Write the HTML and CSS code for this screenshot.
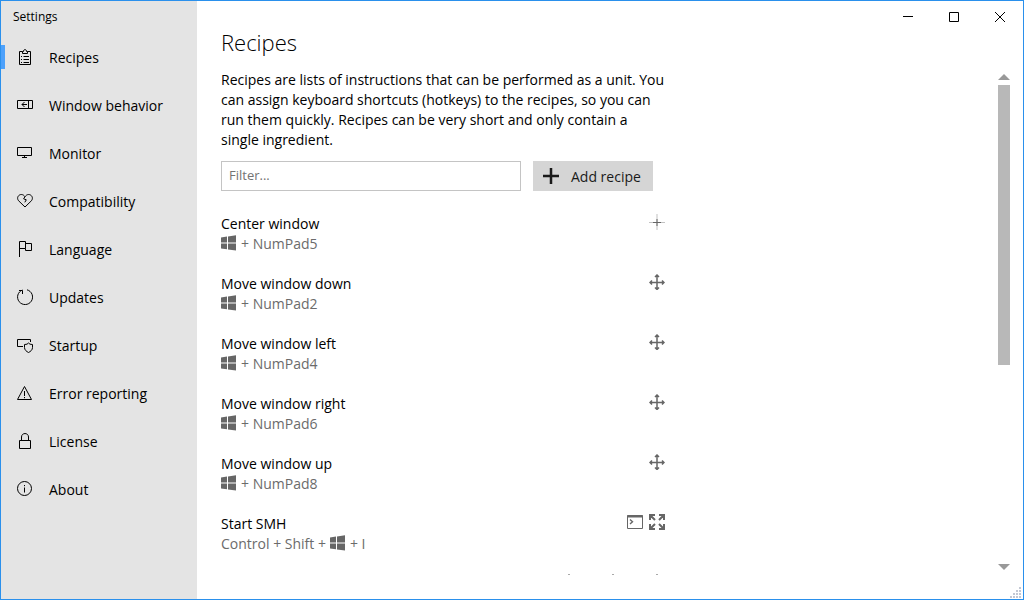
FILE: index.html
```html
<!DOCTYPE html>
<html lang="en">
<head>
<meta charset="utf-8">
<title>Settings</title>
<link rel="stylesheet" href="styles.css">
</head>
<body>
<svg class="defs" aria-hidden="true">
  <symbol id="win" viewBox="0 0 16 16"><path fill="currentColor" d="M0 2.5 6 1.6V7.5H0zM7 1.4 15 0.2V7.5H7zM0 8.5H6V14.2L0 13.4zM7 8.5H15V15.6L7 14.4z"/></symbol>
  <symbol id="move" viewBox="0 0 16 16"><path fill="none" stroke="currentColor" stroke-width="1.5" d="M8 1V15M1 8.500H15M6 3 8 1 10 3M6 13.500 8 15.500 10 13.500M3 6.500 1 8.500 3 10.500M13 6.500 15 8.500 13 10.500"/></symbol>
</svg>
<div class="window">
  <aside class="sidebar">
    <div class="caption">Settings</div>
    <nav class="nav">
      <a class="nav-item selected" href="#recipes" aria-current="page">
        <svg class="icon" viewBox="0 0 16 16"><path d="M5.5 2.5H2.5V15.5H13.5V2.5H10.5M5.500 4.500V2.500H6.500V1.500Q8 -.5 9.500 1.500V2.500H10.500V4.500H5.500M4 7.500H5M6.500 7.500H12M4 10.500H5M6.500 10.500H12M4 13.500H5M6.500 13.500H12"/></svg><span class="nav-text">Recipes</span></a>
      <a class="nav-item" href="#window">
        <svg class="icon" viewBox="0 0 16 16"><path d="M.5 3.500H15.500V11.500H.5zM11.500 3.500V11.500M5 7.500H10M7.500 5 5 7.500 7.500 10"/></svg><span class="nav-text">Window behavior</span></a>
      <a class="nav-item" href="#monitor">
        <svg class="icon" viewBox="0 0 16 16"><path d="M.5 2.500H14.500V10.500H.5zM7.500 10.500V12.500M5 12.500H10"/></svg><span class="nav-text">Monitor</span></a>
      <a class="nav-item" href="#compatibility">
        <svg class="icon" viewBox="0 0 16 16"><path d="M8 14 1.500 7.700C-.8 4.500 1.800 1.500 4.300 1.500 6.200 1.500 7.200 2.700 8 3.700 8.800 2.700 9.800 1.500 11.700 1.500 14.200 1.500 16.800 4.500 14.500 7.700zM8 3.700 6.600 5.800 9.300 6.800 7.800 9.300"/></svg><span class="nav-text">Compatibility</span></a>
      <a class="nav-item" href="#language">
        <svg class="icon" viewBox="0 0 16 16"><path d="M2.500 16V.5H8.500V7.500H2.500M8.500 2.500H14.500V9.500H8.500V7.500"/></svg><span class="nav-text">Language</span></a>
      <a class="nav-item" href="#updates">
        <svg class="icon" viewBox="0 0 16 16"><path d="M10 .8A7.500 7.500 0 1 1 5.500 1M2 1.500H5.500V5"/></svg><span class="nav-text">Updates</span></a>
      <a class="nav-item" href="#startup">
        <svg class="icon" viewBox="0 0 16 16"><path d="M6 9.500H.5V2.500H13.500V5M11.500 6 10 7.200 7.500 7.500V10.500C7.500 13 9.500 14.500 11.500 15.500 13.500 14.500 15.500 13 15.500 10.500V7.500L13 7.200z"/></svg><span class="nav-text">Startup</span></a>
      <a class="nav-item" href="#errors">
        <svg class="icon" viewBox="0 0 16 16"><path d="M7.500 1.500 14.500 14.500H.5zM7.500 6V11M7.500 12V13.200"/></svg><span class="nav-text">Error reporting</span></a>
      <a class="nav-item" href="#license">
        <svg class="icon" viewBox="0 0 16 16"><path d="M2.500 7.500H13.500V15.500H2.500zM4.500 7.500V4C4.500 -.6 11.500 -.6 11.500 4V7.500"/></svg><span class="nav-text">License</span></a>
      <a class="nav-item" href="#about">
        <svg class="icon" viewBox="0 0 16 16"><circle cx="7.500" cy="7.500" r="7"/><path d="M7.500 6.500V11.500M7.500 4V5.200"/></svg><span class="nav-text">About</span></a>
    </nav>
  </aside>

  <main class="main">
    <header class="header">
      <h1 class="title">Recipes</h1>
      <div class="controls">
        <button class="control" aria-label="Minimize"><svg class="glyph" viewBox="0 0 10 10"><path d="M0 4.500H10"/></svg></button>
        <button class="control" aria-label="Maximize"><svg class="glyph" viewBox="0 0 10 10"><path d="M.5 .5H9.500V9.500H.5z"/></svg></button>
        <button class="control" aria-label="Close"><svg class="glyph" viewBox="0 0 10 10"><path d="M0 0 10 10M10 0 0 10"/></svg></button>
      </div>
    </header>
    <div class="scroller">
      <div class="content">
        <p class="intro">Recipes are lists of instructions that can be performed as a unit. You<br>can assign keyboard shortcuts (hotkeys) to the recipes, so you can<br>run them quickly. Recipes can be very short and only contain a<br>single ingredient.</p>
        <div class="toolbar">
          <input class="filter" type="text" placeholder="Filter..." aria-label="Filter">
          <button class="add"><svg class="plus" viewBox="0 0 16 16"><path d="M8 0V16M0 8H16"/></svg><span class="nav-text">Add recipe</span></button>
        </div>
        <ul class="list">
          <li class="row">
            <div class="label"><div>Center window</div><div class="keys"><svg class="win"><use href="#win"/></svg>+ NumPad5</div></div>
            <div class="badges"><svg class="badge" viewBox="0 0 16 16" fill="none" stroke="currentColor"><path opacity=".2" stroke-width="2" d="M8 0V16"/><path opacity=".4" d="M0 8.500H16"/><path d="M4 8.500H12M8 5V12"/></svg></div>
          </li>
          <li class="row">
            <div class="label"><div>Move window down</div><div class="keys"><svg class="win"><use href="#win"/></svg>+ NumPad2</div></div>
            <div class="badges"><svg class="badge"><use href="#move"/></svg></div>
          </li>
          <li class="row">
            <div class="label"><div>Move window left</div><div class="keys"><svg class="win"><use href="#win"/></svg>+ NumPad4</div></div>
            <div class="badges"><svg class="badge"><use href="#move"/></svg></div>
          </li>
          <li class="row">
            <div class="label"><div>Move window right</div><div class="keys"><svg class="win"><use href="#win"/></svg>+ NumPad6</div></div>
            <div class="badges"><svg class="badge"><use href="#move"/></svg></div>
          </li>
          <li class="row">
            <div class="label"><div>Move window up</div><div class="keys"><svg class="win"><use href="#win"/></svg>+ NumPad8</div></div>
            <div class="badges"><svg class="badge"><use href="#move"/></svg></div>
          </li>
          <li class="row">
            <div class="label"><div>Start SMH</div><div class="keys">Control + Shift + <svg class="win"><use href="#win"/></svg>+ I</div></div>
            <div class="badges">
              <svg class="badge" viewBox="0 0 16 16" fill="none" stroke="currentColor"><path d="M.5 1.500H15.500V14.500H.5z"/><path stroke-width="2" d="M0 2.500H16"/><path stroke-width="1.4" d="M3 5.500 5.500 7.800 3 10"/></svg>
              <svg class="badge" viewBox="0 0 16 16" fill="none" stroke="currentColor" stroke-width="2"><path d="M1 6V1H6M1 1 6 6M10 1H15V6M15 1 10 6M1 10V15H6M1 15 6 10M10 15H15V10M15 15 10 10"/></svg>
            </div>
          </li>
          <li class="row">
            <div class="label"></div>
            <div class="badges spread"><svg class="badge"><use href="#move"/></svg><svg class="badge"><use href="#move"/></svg><svg class="badge"><use href="#move"/></svg></div>
          </li>
        </ul>
      </div>
      <div class="scrollbar">
        <button class="arrow" aria-label="Scroll up"><svg class="tri" viewBox="0 0 12 6"><path d="M0 6 6 0 12 6z"/></svg></button>
        <div class="track"><div class="thumb"></div></div>
        <button class="arrow" aria-label="Scroll down"><svg class="tri" viewBox="0 0 12 6"><path d="M0 0 6 6 12 0z"/></svg></button>
      </div>
    </div>
    <svg class="grip" viewBox="0 0 12 12"><path d="M9 0h2v2h-2zM6 3h2v2h-2zM9 3h2v2h-2zM3 6h2v2h-2zM6 6h2v2h-2zM9 6h2v2h-2zM0 9h2v2h-2zM3 9h2v2h-2zM6 9h2v2h-2zM9 9h2v2h-2z"/></svg>
  </main>
</div>
</body>
</html>
```
FILE: styles.css
```css
* { box-sizing: border-box; }

body {
  margin: 0;
  font: 14px/20px "Open Sans", "Noto Sans", sans-serif;
  color: #000;
  background: #fff;
}

button {
  padding: 0;
  border: 0;
  background: none;
  font: inherit;
  color: inherit;
}

.defs { display: none; }

.window {
  display: flex;
  height: 100vh;
  border: 1px solid #2a90ec;
}

.sidebar {
  flex: none;
  width: 196px;
  background: #e4e4e4;
}

.caption {
  height: 32px;
  padding-left: 12px;
  font-size: 12px;
  line-height: 32px;
}

.nav {
  display: flex;
  flex-direction: column;
}

.nav-item {
  position: relative;
  display: flex;
  align-items: center;
  gap: 16px;
  height: 48px;
  padding-left: 16px;
  color: inherit;
  text-decoration: none;
}

.selected::before {
  content: "";
  position: absolute;
  left: 0;
  top: 12px;
  width: 4px;
  height: 24px;
  background: #4da1fb;
}

.nav-text { padding-top: 2px; }

.icon {
  flex: none;
  width: 16px;
  height: 16px;
  fill: none;
  stroke: #000;
}

.main {
  position: relative;
  display: flex;
  flex: 1;
  flex-direction: column;
  min-width: 0;
  padding: 0 0 24px 24px;
}

.header {
  display: flex;
  flex: none;
  justify-content: space-between;
  height: 68px;
}

.title {
  margin: 0;
  padding-top: 27px;
  font-size: 22px;
  font-weight: 300;
  line-height: 28px;
}

.controls { display: flex; }

.control {
  display: flex;
  align-items: center;
  justify-content: center;
  width: 46px;
  height: 32px;
}

.glyph {
  width: 10px;
  height: 10px;
  fill: none;
  stroke: #000;
}

.scroller {
  display: flex;
  flex: 1;
  justify-content: space-between;
  min-height: 0;
  padding-right: 10px;
}

.content {
  width: 446px;
  overflow: hidden;
}

.intro {
  margin: 0 0 11px;
  padding-top: 1px;
  white-space: nowrap;
}

.toolbar {
  display: flex;
  gap: 12px;
}

.filter {
  width: 300px;
  height: 30px;
  padding: 0 7px 2px;
  border: 1px solid #c4c4c4;
  font: 13px "Open Sans", "Noto Sans", sans-serif;
}

.filter::placeholder { color: #737373; }

.add {
  display: flex;
  align-items: center;
  gap: 12px;
  width: 120px;
  padding-left: 10px;
  color: #1a1a1a;
  background: #d5d5d5;
}

.plus {
  width: 16px;
  height: 16px;
  stroke: #1a1a1a;
  stroke-width: 2.5;
}

.list {
  margin: 0;
  padding: 23px 0 0;
  list-style: none;
}

.row {
  display: flex;
  justify-content: space-between;
  height: 60px;
}

.keys {
  display: flex;
  align-items: center;
  gap: 4px;
  color: #6b6b6b;
}

.win {
  width: 16px;
  height: 16px;
  margin-bottom: 2px;
  color: #666;
}

.badges {
  display: flex;
  gap: 6px;
  padding-right: 2px;
  color: #666;
}

.spread { gap: 28px; }

.badge {
  width: 16px;
  height: 16px;
}

.scrollbar {
  display: flex;
  flex-direction: column;
  align-items: center;
  width: 18px;
}

.arrow {
  display: flex;
  align-items: center;
  justify-content: center;
  width: 18px;
  height: 16px;
}

.tri {
  width: 12px;
  height: 6px;
  fill: #999;
}

.track {
  flex: 1;
  width: 12px;
}

.thumb {
  height: 59%;
  background: #b8b8b8;
}

.grip {
  position: absolute;
  right: 1px;
  bottom: 0;
  width: 12px;
  height: 12px;
  fill: #c3c8d4;
}
```
